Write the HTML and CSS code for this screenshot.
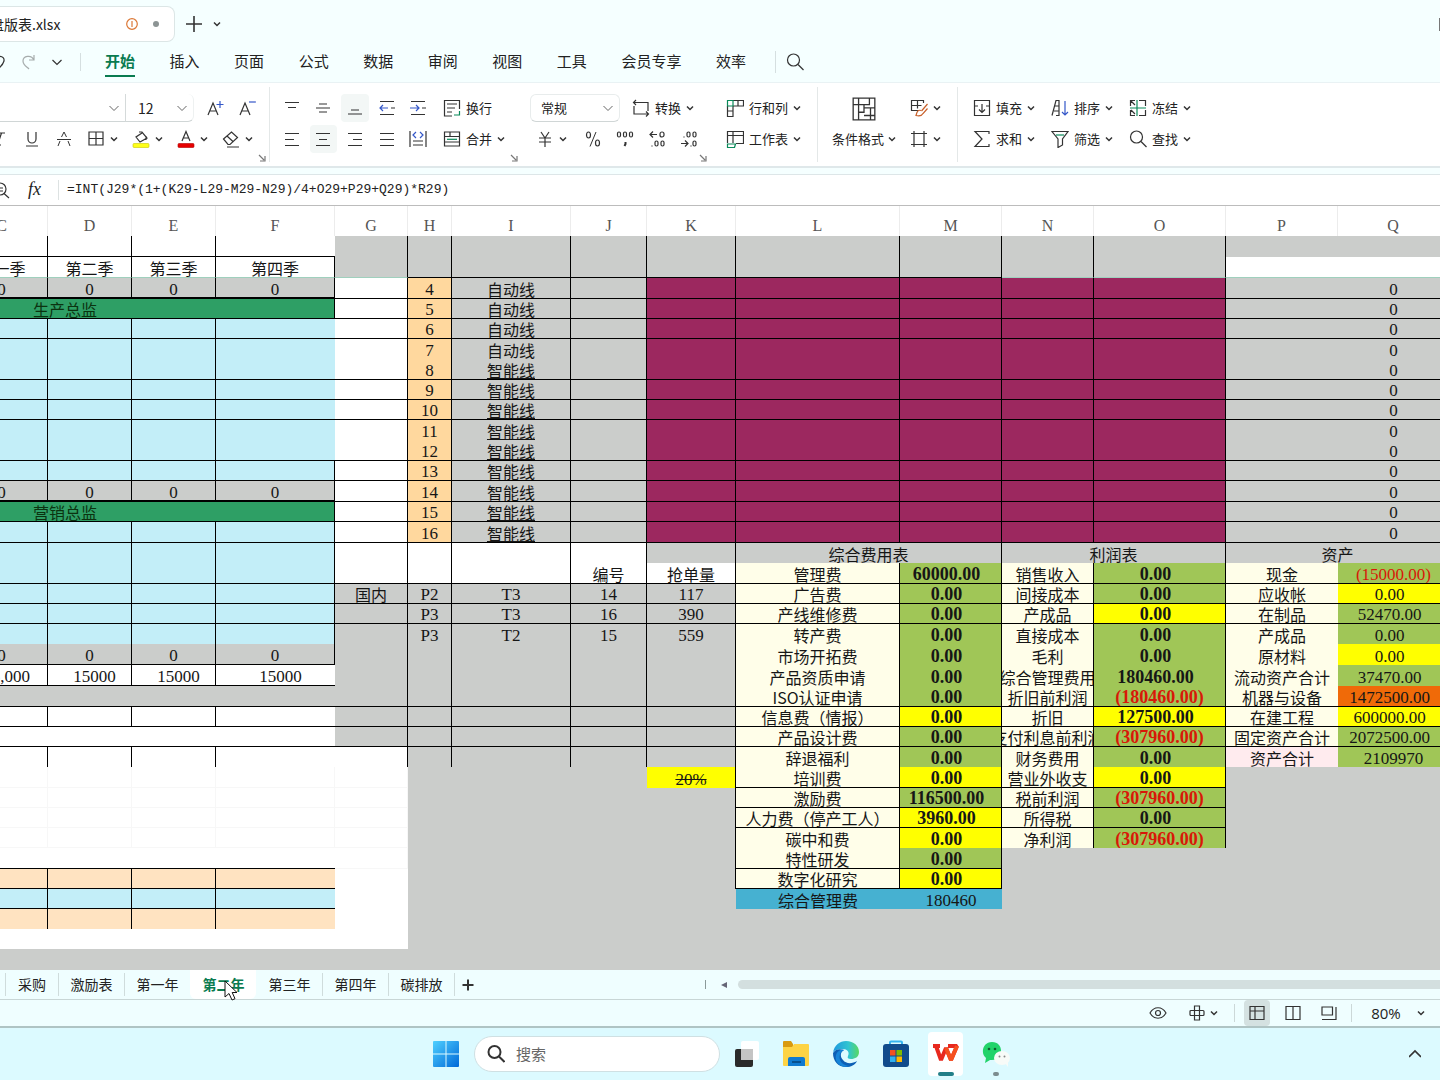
FILE: index.html
```html
<!DOCTYPE html>
<html lang="zh-CN">
<head>
<meta charset="utf-8">
<title>盘版表.xlsx</title>
<link rel="stylesheet" href="styles.css">
</head>
<body>
<svg class="sprite" aria-hidden="true">
  <symbol id="caret" viewBox="0 0 8 8"><path d="M1 2.5 4 5.5 7 2.5" stroke-width="1.5"/></symbol>
  <symbol id="chev" viewBox="0 0 12 12"><path d="M1.500 4 6 8.500 10.500 4"/></symbol>
  <symbol id="plus" viewBox="0 0 18 18"><path d="M9 1v16M1 9h16" stroke-width="1.600"/></symbol>
  <symbol id="search" viewBox="0 0 18 18"><circle cx="7.500" cy="7" r="6"/><path d="m12 11.500 5.500 5.500"/></symbol>
  <symbol id="undo" viewBox="0 0 18 18"><path d="M4 2v5h5M4 7c3-5 12-5 11 1-1 4-4 6-6 8"/></symbol>
  <symbol id="redo" viewBox="0 0 18 18"><path d="M14 2v5H9M14 7C11 1 3 3 3 8c0 4 4 6 6 8"/></symbol>
  <symbol id="italic" viewBox="0 0 18 18"><path d="M7 3h7M3 15h7M10.500 3l-4 12"/></symbol>
  <symbol id="under" viewBox="0 0 18 18"><path d="M5 2v7a4 4 0 0 0 8 0V2M3 16h12"/></symbol>
  <symbol id="strike" viewBox="0 0 18 18"><path d="M6.500 7 9 2l2.500 5M5 11l-2 5M13 11l2 5M2 9.500h14" stroke-width="1"/></symbol>
  <symbol id="border" viewBox="0 0 18 18"><path d="M2 2h14v13H2zM9 2v13M2 8.500h14"/></symbol>
  <symbol id="fill" viewBox="0 0 18 18"><path d="M7 2h3l5 6-7 4-4-5 6-4M14 6v4"/><rect x="1" y="13.500" width="16" height="4" rx="1" fill="#ffff1a" stroke="#c8c800" stroke-width=".6"/></symbol>
  <symbol id="color" viewBox="0 0 18 18"><path d="M5 11 9 1.500 13 11M6.500 8h5"/><rect x="1" y="13.500" width="16" height="4" rx="1" fill="#e60000" stroke="#b00000" stroke-width=".6"/></symbol>
  <symbol id="eraser" viewBox="0 0 18 18"><path d="m1.500 9 8-7 6 5.500-7.500 7H6zM5 6l6.500 6M5 17h12"/></symbol>
  <symbol id="aplus" viewBox="0 0 18 18"><path d="M2 16 7 4l5 12M4 12h6"/><path d="M14 2v7M10.500 5.500h7" stroke="#3457c8"/></symbol>
  <symbol id="aminus" viewBox="0 0 18 18"><path d="M2 16 7 4l5 12M4 12h6"/><path d="M11 3h7" stroke="#3457c8"/></symbol>
  <symbol id="vtop" viewBox="0 0 18 18"><path d="M2 3.500h14M5 8.500h8"/></symbol>
  <symbol id="vmid" viewBox="0 0 18 18"><path d="M5 5h8M2 9h14M5 13h8"/></symbol>
  <symbol id="vbot" viewBox="0 0 18 18"><path d="M5 11h8M2 15h14"/></symbol>
  <symbol id="outdent" viewBox="0 0 18 18"><path d="M2 2.500h14M2 15.500h14M13 9h4"/><path d="M10 9H2m3-3L2 9l3 3" stroke="#3457c8"/></symbol>
  <symbol id="indent" viewBox="0 0 18 18"><path d="M2 2.500h14M2 15.500h14M13 9h4"/><path d="M1 9h9M7 6l3 3-3 3" stroke="#3457c8"/></symbol>
  <symbol id="left" viewBox="0 0 18 18"><path d="M2 3.500h14M2 9.500h9M2 15.500h14" stroke-width="1"/></symbol>
  <symbol id="center" viewBox="0 0 18 18"><path d="M2 3.500h14M5 9.500h8M2 15.500h14" stroke-width="1"/></symbol>
  <symbol id="right" viewBox="0 0 18 18"><path d="M2 3.500h14M7 9.500h9M2 15.500h14" stroke-width="1"/></symbol>
  <symbol id="justify" viewBox="0 0 18 18"><path d="M2 3.500h14M2 9.500h14M2 15.500h14" stroke-width="1"/></symbol>
  <symbol id="dist" viewBox="0 0 18 18"><path d="M1 1v16M17 1v16M4 11h10M4 15h10"/><path d="m7 2-3 3 3 3M11 2l3 3-3 3" stroke="#3457c8"/></symbol>
  <symbol id="wrap" viewBox="0 0 18 18"><path d="M9 17H1.500V1.500h15V10M4 5h10M4 9h8M4 13h5"/><path d="M16.500 12v4H11" stroke="#0a8a5a"/></symbol>
  <symbol id="merge" viewBox="0 0 18 18"><path d="M1.500 2h15v14h-15zM1.500 6.500h15M1.500 12h15M7 2v4.500"/><path d="M4 9.300h10" stroke="#0a8a5a"/></symbol>
  <symbol id="convert" viewBox="0 0 18 18"><path d="M4 1 1.500 3.500 4 6M2 3.500h14V12M2 7v8h14M14 12.500l2.500 2.500L14 17.500"/></symbol>
  <symbol id="yen" viewBox="0 0 18 18"><path d="m5 2 4 6 4-6M3 8h12M3 12h12M9 8v9"/></symbol>
  <symbol id="percent" viewBox="0 0 18 18"><ellipse cx="4.500" cy="5" rx="2" ry="3"/><ellipse cx="13.500" cy="13" rx="2" ry="3"/><path d="M12 2 6 16.500" stroke-width="1"/></symbol>
  <symbol id="thousand" viewBox="0 0 18 18"><rect x="1.500" y="2" width="3" height="5" rx="1.500"/><rect x="7.500" y="2" width="3" height="5" rx="1.500"/><rect x="13.500" y="2" width="3" height="5" rx="1.500"/><path d="M9.500 12v2l-1 2" stroke-width="2"/></symbol>
  <symbol id="decinc" viewBox="0 0 18 18"><path d="M9 4.500H2m3-3-3 3 3 3M4 15.500v1"/><rect x="12" y="2" width="4" height="5" rx="2"/><rect x="7" y="11" width="3" height="5" rx="1.500"/><rect x="13" y="11" width="3" height="5" rx="1.500"/></symbol>
  <symbol id="decdec" viewBox="0 0 18 18"><path d="M1 13.500h7m-3-3 3 3-3 3M4 6.500v1M11 15.500v1"/><rect x="7" y="2" width="3" height="5" rx="1.500"/><rect x="13" y="2" width="3" height="5" rx="1.500"/><rect x="13" y="11" width="3" height="5" rx="1.500"/></symbol>
  <symbol id="rowcol" viewBox="0 0 18 18"><path d="M7 1.500h10.500V7H7M12 1.500V7M1.500 7v10.500H7V7M1.500 12H7"/><path d="M1.500 1.500H7V7H1.500z" stroke="#0a8a5a"/></symbol>
  <symbol id="sheet" viewBox="0 0 18 18"><path d="M1.500 13V1.500h16v12H10M1.500 5.500h16M7 1.500V13"/><path d="M1.500 14h8l-1 3.500h-7z" stroke="#0a8a5a"/></symbol>
  <symbol id="cond" viewBox="0 0 24 24"><path d="M2 2h20v20H2zM2 8h15V2M7 2v20M7 15h5V8M12 11h6v11M12 18h10M18 11h4" stroke-width="1.200"/></symbol>
  <symbol id="style" viewBox="0 0 18 18"><path d="M8 11.500H1.500v-10h12V4M1.500 6.500h10M7.500 1.500v8"/><path d="m17.500 5-6 7M11 11.500c-3-1-4 1-5 5 4 1 6 0 7-2l4.500-5" stroke="#c8602a"/></symbol>
  <symbol id="frame" viewBox="0 0 18 18"><path d="M4 1v16M14 1v16M1 3.500h16M1 14.500h16"/></symbol>
  <symbol id="down" viewBox="0 0 18 18"><path d="M5 7H1.500V1.500h15V7H13M1.500 7v9.500h15V7M9 5v8M6 10.500l3 3 3-3"/></symbol>
  <symbol id="sigma" viewBox="0 0 18 18"><path d="M16 4V1.500H2L9 9l-7 7.500h14V14"/></symbol>
  <symbol id="sort" viewBox="0 0 18 18"><path d="M1 16.500 5 1.500h3v15H5M3 12h5M4 7h4"/><path d="M14 2v14M11 13l3 3 3-3" stroke="#3457c8"/></symbol>
  <symbol id="filter" viewBox="0 0 18 18"><path d="M1 1.500h16l-5.500 7.500v6L7 17.500V9z"/><path d="M5 5h8" stroke="#0a8a5a"/></symbol>
  <symbol id="freeze" viewBox="0 0 18 18"><path d="M10 1.500h6.500V7M10 16.500h6.500V11M6 1.500H1.500V7M1.500 11v5.500H6M2 2l4 4M2 11l4 4"/><path d="M8 1v16M1 9h16" stroke="#0a8a5a"/></symbol>
  <symbol id="launch" viewBox="0 0 8 8"><path d="M1 1l5 5M7 2v5H2" stroke="#777"/></symbol>
  <symbol id="eye" viewBox="0 0 18 18"><path d="M1 9c4-7 12-7 16 0-4 7-12 7-16 0z"/><circle cx="9" cy="9" r="2.500"/></symbol>
  <symbol id="cross" viewBox="0 0 18 18"><path d="M6.500 6V2h5v14h-5V6M3 6.500h12a1 1 0 0 1 1 1v3a1 1 0 0 1-1 1H3a1 1 0 0 1-1-1v-3a1 1 0 0 1 1-1z"/></symbol>
  <symbol id="normal" viewBox="0 0 18 18"><path d="M2 2.500h14v13H2zM2 7h14M7 2.500v13"/></symbol>
  <symbol id="book" viewBox="0 0 18 18"><path d="M2 2.500h14v13H2zM9 2.500v13"/></symbol>
  <symbol id="page" viewBox="0 0 18 18"><path d="M2 3h10.500v8H2zM16 3v12.500H2"/></symbol>
</svg>

<header class="titlebar">
  <div class="doc"><span class="doc-name">盘版表.xlsx</span>
    <svg class="warn" viewBox="0 0 12 12"><circle cx="6" cy="6" r="5.300"/><path d="M6 3v6"/></svg><i class="dot"></i></div>
  <button class="plain" aria-label="新建"><svg class="i18"><use href="#plus"/></svg></button>
  <button class="plain" aria-label="更多"><svg class="i8"><use href="#caret"/></svg></button>
  <button class="plain win" aria-label="窗口"></button>
</header>

<nav class="menubar">
  <div class="quick">
    <button class="plain" aria-label="撤销"><svg class="i18"><use href="#undo"/></svg></button>
    <button class="plain faded" aria-label="恢复"><svg class="i18"><use href="#redo"/></svg></button>
    <button class="plain" aria-label="自定义"><svg class="i12"><use href="#chev"/></svg></button>
  </div>
  <div class="menus">
    <button class="menu on">开始</button><button class="menu">插入</button><button class="menu">页面</button><button class="menu">公式</button><button class="menu">数据</button><button class="menu">审阅</button><button class="menu">视图</button><button class="menu">工具</button><button class="menu">会员专享</button><button class="menu">效率</button>
  </div>
  <button class="plain find" aria-label="搜索"><svg class="i18"><use href="#search"/></svg></button>
</nav>

<section class="ribbon">
  <div class="group g-font">
    <div class="line">
      <span class="combo name"><select aria-label="字体"><option></option></select><svg class="i12"><use href="#chev"/></svg></span>
      <span class="combo size"><select aria-label="字号"><option>12</option></select><svg class="i12"><use href="#chev"/></svg></span>
      <span class="pair"><button class="ico" aria-label="增大字号"><svg class="i18"><use href="#aplus"/></svg></button><button class="ico" aria-label="减小字号"><svg class="i18"><use href="#aminus"/></svg></button></span>
    </div>
    <div class="line pull">
      <button class="ico" aria-label="倾斜"><svg class="i18"><use href="#italic"/></svg></button><button class="ico" aria-label="下划线"><svg class="i18"><use href="#under"/></svg></button><button class="ico" aria-label="删除线"><svg class="i18"><use href="#strike"/></svg></button>
      <button class="drop" aria-label="边框"><svg class="i18"><use href="#border"/></svg><svg class="i8"><use href="#caret"/></svg></button><button class="drop" aria-label="填充颜色"><svg class="i18"><use href="#fill"/></svg><svg class="i8"><use href="#caret"/></svg></button><button class="drop" aria-label="字体颜色"><svg class="i18"><use href="#color"/></svg><svg class="i8"><use href="#caret"/></svg></button><button class="drop" aria-label="清除"><svg class="i18"><use href="#eraser"/></svg><svg class="i8"><use href="#caret"/></svg></button>
    </div>
    <svg class="launch"><use href="#launch"/></svg>
  </div>

  <div class="group g-align">
    <div class="line">
      <div class="five"><button class="ico" aria-label="顶端对齐"><svg class="i18"><use href="#vtop"/></svg></button><button class="ico" aria-label="垂直居中"><svg class="i18"><use href="#vmid"/></svg></button><button class="ico on" aria-label="底端对齐"><svg class="i18"><use href="#vbot"/></svg></button><button class="ico" aria-label="减少缩进"><svg class="i18"><use href="#outdent"/></svg></button><button class="ico" aria-label="增加缩进"><svg class="i18"><use href="#indent"/></svg></button></div>
      <button class="tool"><svg class="i18"><use href="#wrap"/></svg>换行</button>
    </div>
    <div class="line">
      <div class="five"><button class="ico" aria-label="左对齐"><svg class="i18"><use href="#left"/></svg></button><button class="ico on" aria-label="水平居中"><svg class="i18"><use href="#center"/></svg></button><button class="ico" aria-label="右对齐"><svg class="i18"><use href="#right"/></svg></button><button class="ico" aria-label="两端对齐"><svg class="i18"><use href="#justify"/></svg></button><button class="ico" aria-label="分散对齐"><svg class="i18"><use href="#dist"/></svg></button></div>
      <button class="tool"><svg class="i18"><use href="#merge"/></svg>合并<svg class="i8"><use href="#caret"/></svg></button>
    </div>
    <svg class="launch"><use href="#launch"/></svg>
  </div>

  <div class="group g-num">
    <div class="line">
      <span class="combo fmt"><select aria-label="数字格式"><option>常规</option></select><svg class="i12"><use href="#chev"/></svg></span>
      <button class="tool"><svg class="i18"><use href="#convert"/></svg>转换<svg class="i8"><use href="#caret"/></svg></button>
    </div>
    <div class="line">
      <button class="drop" aria-label="货币"><svg class="i18"><use href="#yen"/></svg><svg class="i8"><use href="#caret"/></svg></button><button class="ico" aria-label="百分比"><svg class="i18"><use href="#percent"/></svg></button><button class="ico" aria-label="千位分隔"><svg class="i18"><use href="#thousand"/></svg></button><button class="ico" aria-label="增加小数位"><svg class="i18"><use href="#decinc"/></svg></button><button class="ico" aria-label="减少小数位"><svg class="i18"><use href="#decdec"/></svg></button>
    </div>
    <svg class="launch"><use href="#launch"/></svg>
  </div>

  <div class="group g-rows">
    <div class="line"><button class="tool"><svg class="i18"><use href="#rowcol"/></svg>行和列<svg class="i8"><use href="#caret"/></svg></button></div>
    <div class="line"><button class="tool"><svg class="i18"><use href="#sheet"/></svg>工作表<svg class="i8"><use href="#caret"/></svg></button></div>
  </div>

  <div class="group g-style">
    <button class="big"><svg class="i24"><use href="#cond"/></svg><span>条件格式<svg class="i8"><use href="#caret"/></svg></span></button>
    <div class="stack">
      <button class="drop" aria-label="表格样式"><svg class="i18"><use href="#style"/></svg><svg class="i8"><use href="#caret"/></svg></button>
      <button class="drop" aria-label="单元格样式"><svg class="i18"><use href="#frame"/></svg><svg class="i8"><use href="#caret"/></svg></button>
    </div>
  </div>

  <div class="group g-edit">
    <div class="line">
      <button class="tool"><svg class="i18"><use href="#down"/></svg>填充<svg class="i8"><use href="#caret"/></svg></button><button class="tool"><svg class="i18"><use href="#sort"/></svg>排序<svg class="i8"><use href="#caret"/></svg></button><button class="tool"><svg class="i18"><use href="#freeze"/></svg>冻结<svg class="i8"><use href="#caret"/></svg></button>
    </div>
    <div class="line">
      <button class="tool"><svg class="i18"><use href="#sigma"/></svg>求和<svg class="i8"><use href="#caret"/></svg></button><button class="tool"><svg class="i18"><use href="#filter"/></svg>筛选<svg class="i8"><use href="#caret"/></svg></button><button class="tool"><svg class="i18"><use href="#search"/></svg>查找<svg class="i8"><use href="#caret"/></svg></button>
    </div>
  </div>
</section>

<div class="formula">
  <svg class="i18 zoomer" viewBox="0 0 18 18"><circle cx="8" cy="8" r="6"/><path d="M5 7h6M5 10h6M12 12.500l5 4.500"/></svg>
  <label class="fx" for="formula">fx</label>
  <input id="formula" value="=INT(J29*(1+(K29-L29-M29-N29)/4+O29+P29+Q29)*R29)">
</div>

<main class="sheet"><table class="grid" id="grid"></table></main>

<footer class="tabs">
  <div class="tablist">
    <button class="tab short">采购</button><button class="tab">激励表</button><button class="tab">第一年</button><button class="tab on">第二年<svg class="cursor" viewBox="0 0 14 21"><path d="M1 1v16l4-3.500L8 20l3-1.300L8.200 12.500H13z"/></svg></button><button class="tab">第三年</button><button class="tab">第四年</button><button class="tab">碳排放</button>
    <button class="plain add" aria-label="新建工作表"><svg class="i12" viewBox="0 0 12 12"><path d="M6 .5v11M.5 6h11" stroke-width="2"/></svg></button>
  </div>
  <div class="hscroll"><i class="grip"></i><svg class="i8" viewBox="0 0 8 8"><path d="M7 1v6L1 4z" class="solid"/></svg><i class="track"></i></div>
</footer>

<div class="status">
  <button class="plain" aria-label="护眼模式"><svg class="i18"><use href="#eye"/></svg></button>
  <button class="plain move" aria-label="阅读模式"><svg class="i18"><use href="#cross"/></svg><svg class="i8"><use href="#caret"/></svg></button>
  <div class="views"><button class="plain on" aria-label="普通视图"><svg class="i18"><use href="#normal"/></svg></button><button class="plain" aria-label="分页预览"><svg class="i18"><use href="#book"/></svg></button><button class="plain" aria-label="页面布局"><svg class="i18"><use href="#page"/></svg></button></div>
  <button class="plain pct">80%<svg class="i8"><use href="#caret"/></svg></button>
</div>

<div class="taskbar">
  <button class="app" aria-label="开始菜单"><svg viewBox="0 0 28 28"><defs><linearGradient id="w" x1="0" y1="0" x2="1" y2="1"><stop offset="0" stop-color="#4fd0ff"/><stop offset="1" stop-color="#0068d8"/></linearGradient></defs><path d="M1 2a1 1 0 0 1 1-1h11.500v12.500H1zM14.500 1H26a1 1 0 0 1 1 1v11.500H14.500zM1 14.500h12.500V27H2a1 1 0 0 1-1-1zM14.500 14.500H27V26a1 1 0 0 1-1 1H14.500z" fill="url(#w)"/></svg></button>
  <label class="searchbox"><svg class="i18"><use href="#search"/></svg><input placeholder="搜索" aria-label="搜索"></label>
  <div class="apps">
    <button class="app" aria-label="任务视图"><svg viewBox="0 0 28 28"><rect x="9" y="1" width="18" height="19" rx="2" fill="#fff"/><rect x="3" y="9" width="18" height="18" rx="2" fill="#2a2a2a"/><path d="M9 9h12v11H9z" fill="#c4c4c4"/></svg></button>
    <button class="app" aria-label="文件资源管理器"><svg viewBox="0 0 28 28"><path d="M1 2a1 1 0 0 1 1-1h7l2 3v5H1z" fill="#d99a10"/><path d="M1 7h9l2-3h14a1 1 0 0 1 1 1v20a1 1 0 0 1-1 1H2a1 1 0 0 1-1-1z" fill="#fdd345"/><path d="M6 26v-7a2 2 0 0 1 2-2h13a2 2 0 0 1 2 2v7z" fill="#0f7ad0"/><path d="M10 22h9" stroke="#06508f" stroke-width="2"/></svg></button>
    <button class="app" aria-label="Edge"><svg viewBox="0 0 28 28"><defs><linearGradient id="e" x1="0" y1="0" x2="1" y2="0"><stop offset="0" stop-color="#1f98e0"/><stop offset=".6" stop-color="#30c5d0"/><stop offset="1" stop-color="#5ad860"/></linearGradient></defs><path d="M1 13C2 5 8 1 14 1c8 0 13 5 13 11 0 5-4 7-8 7-3 0-4-1-3-3 2-4-1-7-5-7-5 0-9 1-10 4z" fill="url(#e)"/><path d="M1 13c3-5 8-4 11-3-4 2-4 7-1 10 3 4 9 4 14 1-2 4-6 6-11 6C6 27 1 21 1 13z" fill="#0c5fb5"/><path d="M12 10c-5 2-6 9-2 13 2 2 5 3 8 3-8 3-16-3-14-11 1-4 5-6 8-5z" fill="#1684d8"/></svg></button>
    <button class="app" aria-label="应用商店"><svg viewBox="0 0 28 28"><path d="M8 6V2.500a1 1 0 0 1 1-1h10a1 1 0 0 1 1 1V6" fill="none" stroke="#36b4f0" stroke-width="2"/><rect x="1" y="4" width="26" height="23" rx="3" fill="#114b8c"/><path d="M8 10h5.500v5.500H8z" fill="#f25022"/><path d="M14.500 10H20v5.500h-5.500z" fill="#7fba00"/><path d="M8 16.500h5.500V22H8z" fill="#30b0f0"/><path d="M14.500 16.500H20V22h-5.500z" fill="#ffb900"/></svg></button>
    <button class="app on" aria-label="WPS"><svg viewBox="0 0 28 28"><path d="M1 6h7M4 6l5 14 5-12 5 12 6-14H16" fill="none" stroke="#e8281e" stroke-width="4" stroke-linejoin="bevel"/><path d="M14 8l5 12 6-14" fill="none" stroke="#f5501e" stroke-width="4" stroke-linejoin="bevel"/></svg></button>
    <button class="app run" aria-label="微信"><svg viewBox="0 0 28 28"><path d="M10 2c6 0 9 4 9 9s-3 9-9 9H8l-5 3 1-5C-2 13 1 2 10 2z" fill="#22d36a"/><circle cx="7" cy="9" r="1.300" fill="#105c30"/><circle cx="13" cy="9" r="1.300" fill="#105c30"/><ellipse cx="20" cy="18" rx="8" ry="7" fill="#f8fbf8"/><path d="m23 23 3 4v-6z" fill="#f8fbf8"/><circle cx="17.500" cy="16.500" r="1" fill="#888"/><circle cx="22.500" cy="16.500" r="1" fill="#888"/></svg></button>
  </div>
  <button class="plain tray" aria-label="显示隐藏的图标"><svg class="i12" viewBox="0 0 12 12"><path d="M0 9l6-6 6 6" stroke-width="1.600"/></svg></button>
</div>
<script src="grid.js"></script>
</body>
</html>
```
FILE: styles.css
```css
* { box-sizing: border-box; }
body {
  margin: 0;
  min-height: 100vh;
  display: flex;
  flex-direction: column;
  overflow-x: hidden;
  background: #f5ffff;
  color: #222;
  font: 13px/18px "Noto Sans CJK SC", sans-serif;
}
button, input, select { font: inherit; color: inherit; margin: 0; }
button { padding: 0; border: 0; background: none; white-space: nowrap; }
svg { fill: none; stroke: #333; stroke-width: 1.2; flex: none; }
.sprite { display: none; }
.i8 { width: 8px; height: 8px; }
.i12 { width: 12px; height: 12px; }
.i18 { width: 18px; height: 18px; }
.i24 { width: 26px; height: 26px; }
.plain { display: inline-flex; align-items: center; justify-content: center; }

/* title bar */
.titlebar { height: 42px; display: flex; align-items: center; padding-top: 6px; }
.doc {
  width: 175px; height: 36px;
  display: flex; align-items: center;
  background: #fff;
  border: 1px solid #dce6e6; border-left: 0;
  border-radius: 0 8px 8px 0;
}
.doc-name { margin-left: -10px; flex: 1; font-size: 14px; }
.warn { width: 12px; height: 12px; stroke: #dc7836; margin-right: 15px; }
.dot { width: 6px; height: 6px; border-radius: 50%; background: #8c9494; margin-right: 15px; }
.titlebar .plain { margin-left: 10px; height: 24px; }
.titlebar .win { margin-left: auto; width: 1px; height: 13px; background: #777; }

/* menu bar */
.menubar { height: 41px; display: flex; align-items: center; border-bottom: 1px solid #e9f2f4; }
.quick { width: 81px; height: 18px; display: flex; align-items: center; gap: 13px; border-right: 1px solid #d5dfe0; }
.quick .plain:first-child { margin-left: -11px; }
.faded { opacity: .4; }
.menus { flex: 0 0 641px; margin-left: 24px; display: flex; justify-content: space-between; }
.menu { font-size: 15px; line-height: 28px; border-bottom: 2px solid transparent; }
.menu.on { color: #0a7b50; font-weight: 700; border-color: #0a7b50; }
.find { margin-left: 29px; padding-left: 10px; height: 22px; border-left: 1px solid #d5dfe0; }

/* ribbon */
.ribbon { height: 85px; padding-top: 4px; display: flex; background: #fff; border-bottom: 2px solid #dfe8ea; }
.group { position: relative; padding-top: 7px; height: 75px; display: flex; flex-direction: column; gap: 3px; border-right: 1px solid #e4e8e8; }
.line { display: flex; height: 28px; }
.ico { width: 32px; height: 28px; display: flex; align-items: center; justify-content: center; border-radius: 4px; }
.ico.on { background: #f3f7f6; }
.drop { width: 45px; height: 28px; padding-left: 7px; display: flex; align-items: center; gap: 5px; }
.tool { height: 28px; display: flex; align-items: center; gap: 5px; }
.launch { position: absolute; right: 3px; bottom: 0; width: 8px; height: 8px; }
.combo { display: flex; align-items: center; border-bottom: 1px solid #d0d6d6; padding-right: 5px; }
.combo svg { stroke: #666; stroke-width: 1; }
.combo select { flex: 1; min-width: 0; appearance: none; border: 0; background: none; padding: 0; outline: 0; }
.g-font { width: 270px; }
.name { width: 126px; border-right: 1px solid #d5dada; }
.size { width: 68px; padding-left: 12px; border-right: 1px solid #eef1f1; border-radius: 0 6px 6px 0; }
.size select { font-size: 14px; }
.pair { display: flex; margin-left: 5px; }
.pull { margin-left: -16px; }
.g-align { width: 251px; padding-left: 6px; border-right: 0; }
.five { width: 158px; margin-right: 9px; display: grid; grid-template-columns: repeat(5, 1fr); }
.five .ico { width: auto; margin: 0 2px; }
.g-num { width: 188px; padding-left: 9px; border-right: 0; }
.g-num .drop { width: 47px; padding-left: 6px; }
.fmt { width: 90px; padding-left: 10px; margin-right: 12px; border: 1px solid #e8ecec; border-bottom-color: #d0d6d6; border-radius: 6px; }
.g-num .launch { right: 2px; }
.g-rows { width: 109px; padding-left: 17px; }
.g-style { width: 140px; padding-left: 14px; flex-direction: row; gap: 7px; }
.big { display: flex; flex-direction: column; align-items: center; gap: 8px; padding-top: 2px; }
.big span { display: flex; align-items: center; gap: 4px; }
.stack { display: flex; flex-direction: column; gap: 3px; }
.g-edit { padding-left: 15px; border-right: 0; }
.g-edit .line { gap: 16px; }

/* formula bar */
.formula { height: 32px; margin-top: 6px; display: flex; align-items: center; background: #fff; border-top: 1px solid #dde6e8; border-bottom: 1px solid #bcbcbc; }
.zoomer { margin-left: -8px; }
.fx { width: 49px; height: 20px; padding-left: 18px; border-right: 1px solid #dde2e2; font: italic 18px/18px "Liberation Serif", serif; }
.formula input { flex: 1; border: 0; outline: 0; background: none; padding: 0 0 0 8px; font: 13px/18px "Liberation Mono", monospace; }

/* grid */
.sheet { flex: 1 0 auto; overflow: hidden; background: #cbcdcb; }
.grid { table-layout: fixed; width: calc(100% + 213px); margin-left: -204px; border-collapse: separate; border-spacing: 0; font-size: 16px; line-height: 21px; color: #161616; }
.grid th { height: 30px; padding: 10px 0 0; background: #fff; border-right: 1px solid #ececec; font: 16px/18px "Liberation Serif", serif; color: #555; }
.grid td { height: 20px; padding: 0; overflow: hidden; vertical-align: bottom; border: 0 solid #000; background: #cbcdcb; }
.grid .tall td { height: 21px; }
.grid td.br { border-right-width: 1px; }
.grid td.bb { border-bottom-width: 1px; }
.grid td.thick { border-bottom-width: 2px; }
.grid td.gr { border-right: 1px solid #f7f7f7; border-bottom: 1px solid #f7f7f7; }
.grid td.freeze { border-bottom: 1px solid #9fd0bd; }
.v { display: flex; justify-content: center; white-space: nowrap; height: 19px; }
.thick .v { height: 18px; }
.n { font: 17px/21px "Liberation Serif", serif; }
.b { font: bold 18px/21px "Liberation Serif", serif; }
.pos { padding-right: 8px; }
.acc { padding-left: 10px; }
.red { color: #d81808; }
.u { text-decoration: underline; }
.s { text-decoration: line-through; }
.grid .white { background: #fff; }
.grid .sky { background: #c3eef8; }
.grid .green { background: #2e9f65; color: #0b3310; }
.grid .sand { background: #ffd89e; }
.grid .peach { background: #ffe3c1; }
.grid .plum { background: #9c285f; }
.grid .ivory { background: #fffee9; }
.grid .lime { background: #a0c657; }
.grid .yellow { background: #ff0; }
.grid .orange { background: #f06a08; }
.grid .pink { background: #ffebee; }
.grid .blue { background: #46b1d1; }

/* sheet tabs */
.tabs { height: 30px; display: flex; align-items: center; background: #effeff; border-bottom: 1px solid #c8d6d6; }
.tablist { display: flex; align-items: center; flex: 0 0 700px; padding-left: 5px; }
.tab { position: relative; width: 66px; height: 23px; padding-bottom: 2px; border-left: 1px solid #cfdcdc; font-size: 14px; }
.tab.short { width: 53px; }
.tab.on { height: 29px; background: #fff; color: #0a7b50; font-weight: 700; border-color: #fff; border-radius: 0 0 6px 6px; }
.tab.on + .tab { border-color: transparent; }
.cursor { position: absolute; left: 33px; top: 10px; width: 14px; height: 21px; fill: #fff; stroke: #111; stroke-width: 1; z-index: 1; }
.add { width: 26px; height: 23px; border-left: 1px solid #cfdcdc; }
.hscroll { flex: 1; display: flex; align-items: center; padding-left: 5px; }
.grip { width: 1px; height: 9px; background: #8b9a9a; margin-right: 14px; }
.solid { fill: #667; stroke: none; }
.track { flex: 1; height: 9px; margin-left: 10px; background: #d3dfdf; border-radius: 5px 0 0 5px; }

/* status bar */
.status { height: 28px; display: flex; align-items: center; justify-content: flex-end; background: #effeff; border-bottom: 2px solid #afc4c4; }
.move { margin: 0 16px 0 21px; gap: 4px; }
.views { display: flex; gap: 10px; padding: 0 9px; border: solid #ccd8d8; border-width: 0 1px; height: 18px; align-items: center; }
.views .plain { width: 26px; height: 26px; border-radius: 4px; }
.views .on { background: #d4e1e1; }
.pct { width: 88px; padding-left: 4px; gap: 16px; font: 15px/18px "Open Sans", sans-serif; }

/* taskbar */
.taskbar { height: 52px; display: flex; align-items: center; padding: 0 19px 0 432px; background: #dcfaff; }
.app { position: relative; width: 35px; height: 44px; display: flex; align-items: center; justify-content: center; border-radius: 4px; }
.app svg { width: 28px; height: 28px; stroke: none; }
.taskbar > .app { width: 28px; }
.searchbox { width: 246px; height: 36px; margin-left: 14px; padding: 0 12px; display: flex; align-items: center; gap: 11px; background: #fff; border: 1px solid #cfe0e3; border-radius: 18px; }
.searchbox svg { stroke-width: 2; }
.searchbox input { flex: 1; min-width: 0; border: 0; outline: 0; padding: 0; background: none; font-size: 15px; }
.searchbox input::placeholder { color: #666; opacity: 1; }
.apps { margin-left: 8px; display: flex; gap: 15px; }
.app.on { background: #fff; }
.app.on::after, .app.run::after { content: ""; position: absolute; bottom: 0; width: 16px; height: 4px; border-radius: 2px; background: #237f88; }
.app.run::after { width: 6px; background: #7c8c8f; }
.tray { margin-left: auto; }
```
FILE: grid.js
```js
// Sheet model: columns B..Q, 36 visible rows.
const cols = 'BCDEFGHIJKLMNOPQ';
const widths = [160, 92, 84, 84, 119, 73, 44, 119, 76, 89, 164, 102, 92, 132, 112, 0];
const tall = [1, 2, 3, 7, 11, 13, 15, 17, 21, 22, 23, 27, 31, 36];
const cells = {};
const at = (c, r) => (cells[c + r] ||= { cls: new Set(), html: '' });

// Adds (or with "-" removes) classes over a column span and row span.
function style(from, to, r1, r2, names) {
  for (let r = r1; r <= r2; r++)
    for (let i = cols.indexOf(from); i <= cols.indexOf(to); i++)
      names.split(' ').forEach(n => n[0] === '-' ? at(cols[i], r).cls.delete(n.slice(1)) : at(cols[i], r).cls.add(n));
}
function put(c, r, text, kind = '') { at(c, r).html = `<span class="v ${kind}">${text}</span>`; }

// horizontal rules
[3, 4, 5, 7, 8, 9, 11, 12, 13, 14, 15].forEach(r => style('B', 'Q', r, r, 'bb'));
[17, 18, 19, 23, 24, 25].forEach(r => style('B', 'Q', r, r, 'bb'));
[1, 21, 22, 31, 32, 33].forEach(r => style('B', 'F', r, r, 'bb'));
style('H', 'M', 2, 2, 'bb');
style('B', 'G', 2, 2, 'freeze');
style('N', 'Q', 2, 2, 'freeze');
[27, 28, 29].forEach(r => style('L', 'O', r, r, 'bb'));
[31, 32].forEach(r => style('L', 'M', r, r, 'bb'));
style('B', 'F', 3, 3, 'thick');
style('B', 'F', 13, 13, 'thick');

// vertical rules
[[1, 22], [24, 24], [26, 26], [32, 34]].forEach(([a, b]) => style('B', 'E', a, b, 'br'));
[[2, 4], [12, 21]].forEach(([a, b]) => style('F', 'F', a, b, 'br'));
style('G', 'J', 1, 26, 'br');
style('K', 'M', 1, 32, 'br');
style('N', 'O', 1, 30, 'br');

// fills
style('B', 'F', 1, 2, 'white');
style('B', 'F', 4, 4, 'green');
style('B', 'F', 5, 12, 'sky');
style('B', 'F', 14, 14, 'green');
style('B', 'F', 15, 20, 'sky');
style('B', 'F', 22, 22, 'white');
style('B', 'F', 24, 26, 'white');
style('G', 'G', 3, 17, 'white');
style('H', 'J', 16, 17, 'white');
style('K', 'K', 17, 17, 'white');
style('G', 'G', 26, 26, 'white');
style('B', 'G', 27, 31, 'white gr');
style('B', 'F', 31, 31, '-gr');
style('B', 'F', 32, 32, 'peach');
style('B', 'F', 33, 33, 'sky');
style('B', 'F', 34, 34, 'peach');
style('G', 'G', 32, 34, 'white');
style('B', 'G', 35, 35, 'white');
style('H', 'H', 3, 15, 'sand');
style('K', 'O', 3, 15, 'plum');
style('P', 'Q', 2, 2, 'white');
style('L', 'L', 17, 32, 'ivory');
style('N', 'N', 17, 30, 'ivory');
style('P', 'P', 17, 25, 'ivory');
style('P', 'P', 26, 26, 'pink');
style('L', 'M', 33, 33, 'blue');
style('K', 'K', 27, 27, 'yellow');

// left block
put('C', 2, '第一季'); put('D', 2, '第二季'); put('E', 2, '第三季'); put('F', 2, '第四季');
[3, 13, 21].forEach(r => [...'CDEF'].forEach(c => put(c, r, '0', 'n')));
put('B', 4, '生产总监'); put('B', 14, '营销总监');
put('C', 22, '15,000', 'n acc');
[...'DEF'].forEach(c => put(c, 22, '15000', 'n acc'));

// production lines
const underlined = [8, 10, 11, 12, 15, 16];
for (let k = 4; k <= 16; k++) {
  put('H', k - 1, k, 'n');
  put('I', k - 1, k < 8 ? '自动线' : '智能线', underlined.includes(k) ? 'u' : '');
  put('Q', k - 1, '0', 'n');
}

// orders
put('J', 17, '编号'); put('K', 17, '抢单量'); put('G', 18, '国内');
[['P2', 'T3', 14, 117], ['P3', 'T3', 16, 390], ['P3', 'T2', 15, 559]]
  .forEach((row, i) => row.forEach((t, j) => put('HIJK'[j], 18 + i, t, 'n')));
put('K', 27, '20%', 'n s');

// statements: label, value, fill (lime unless given)
function statement(labelCol, valueCol, weight, rows) {
  rows.forEach(([label, value, fill = 'lime'], i) => {
    const r = 17 + i, neg = value[0] === '(';
    put(labelCol, r, label);
    put(valueCol, r, value, weight + (neg ? ' red' : value.includes('.') ? ' pos' : ''));
    style(valueCol, valueCol, r, r, fill);
  });
}
put('L', 16, '综合费用表'); put('N', 16, '利润表'); put('P', 16, '资产');
const Y = 'yellow';
statement('L', 'M', 'b', [['管理费', '60000.00'], ['广告费', '0.00'], ['产线维修费', '0.00'], ['转产费', '0.00'],
  ['市场开拓费', '0.00'], ['产品资质申请', '0.00'], ['ISO认证申请', '0.00'], ['信息费（情报）', '0.00', Y],
  ['产品设计费', '0.00'], ['辞退福利', '0.00'], ['培训费', '0.00', Y], ['激励费', '116500.00'],
  ['人力费（停产工人）', '3960.00', Y], ['碳中和费', '0.00', Y], ['特性研发', '0.00'], ['数字化研究', '0.00', Y]]);
put('L', 33, '综合管理费'); put('M', 33, '180460', 'n');
statement('N', 'O', 'b', [['销售收入', '0.00'], ['间接成本', '0.00'], ['产成品', '0.00', Y], ['直接成本', '0.00'],
  ['毛利', '0.00'], ['综合管理费用', '180460.00'], ['折旧前利润', '(180460.00)'], ['折旧', '127500.00', Y],
  ['支付利息前利润', '(307960.00)'], ['财务费用', '0.00'], ['营业外收支', '0.00', Y], ['税前利润', '(307960.00)'],
  ['所得税', '0.00'], ['净利润', '(307960.00)']]);
statement('P', 'Q', 'n', [['现金', '(15000.00)'], ['应收帐', '0.00', Y], ['在制品', '52470.00'], ['产成品', '0.00'],
  ['原材料', '0.00', Y], ['流动资产合计', '37470.00'], ['机器与设备', '1472500.00', 'orange'],
  ['在建工程', '600000.00', Y], ['固定资产合计', '2072500.00'], ['资产合计', '2109970']]);

// merged ranges: anchor cell -> number of columns
const merged = { B4: 5, B14: 5, L16: 2, N16: 2, P16: 2 };

let out = '<colgroup>' + widths.map(w => `<col${w ? ` style="width:${w}px"` : ''}>`).join('') + '</colgroup><thead><tr>' +
  [...cols].map(c => `<th scope="col">${c}</th>`).join('') + '</tr></thead><tbody>';
for (let r = 1; r <= 36; r++) {
  out += tall.includes(r) ? '<tr class="tall">' : '<tr>';
  for (let i = 0; i < cols.length; i++) {
    const cell = at(cols[i], r), span = merged[cols[i] + r] || 1;
    out += `<td class="${[...cell.cls].join(' ')}"${span > 1 ? ` colspan="${span}"` : ''}>${cell.html}</td>`;
    i += span - 1;
  }
  out += '</tr>';
}
document.getElementById('grid').innerHTML = out + '</tbody>';
```
